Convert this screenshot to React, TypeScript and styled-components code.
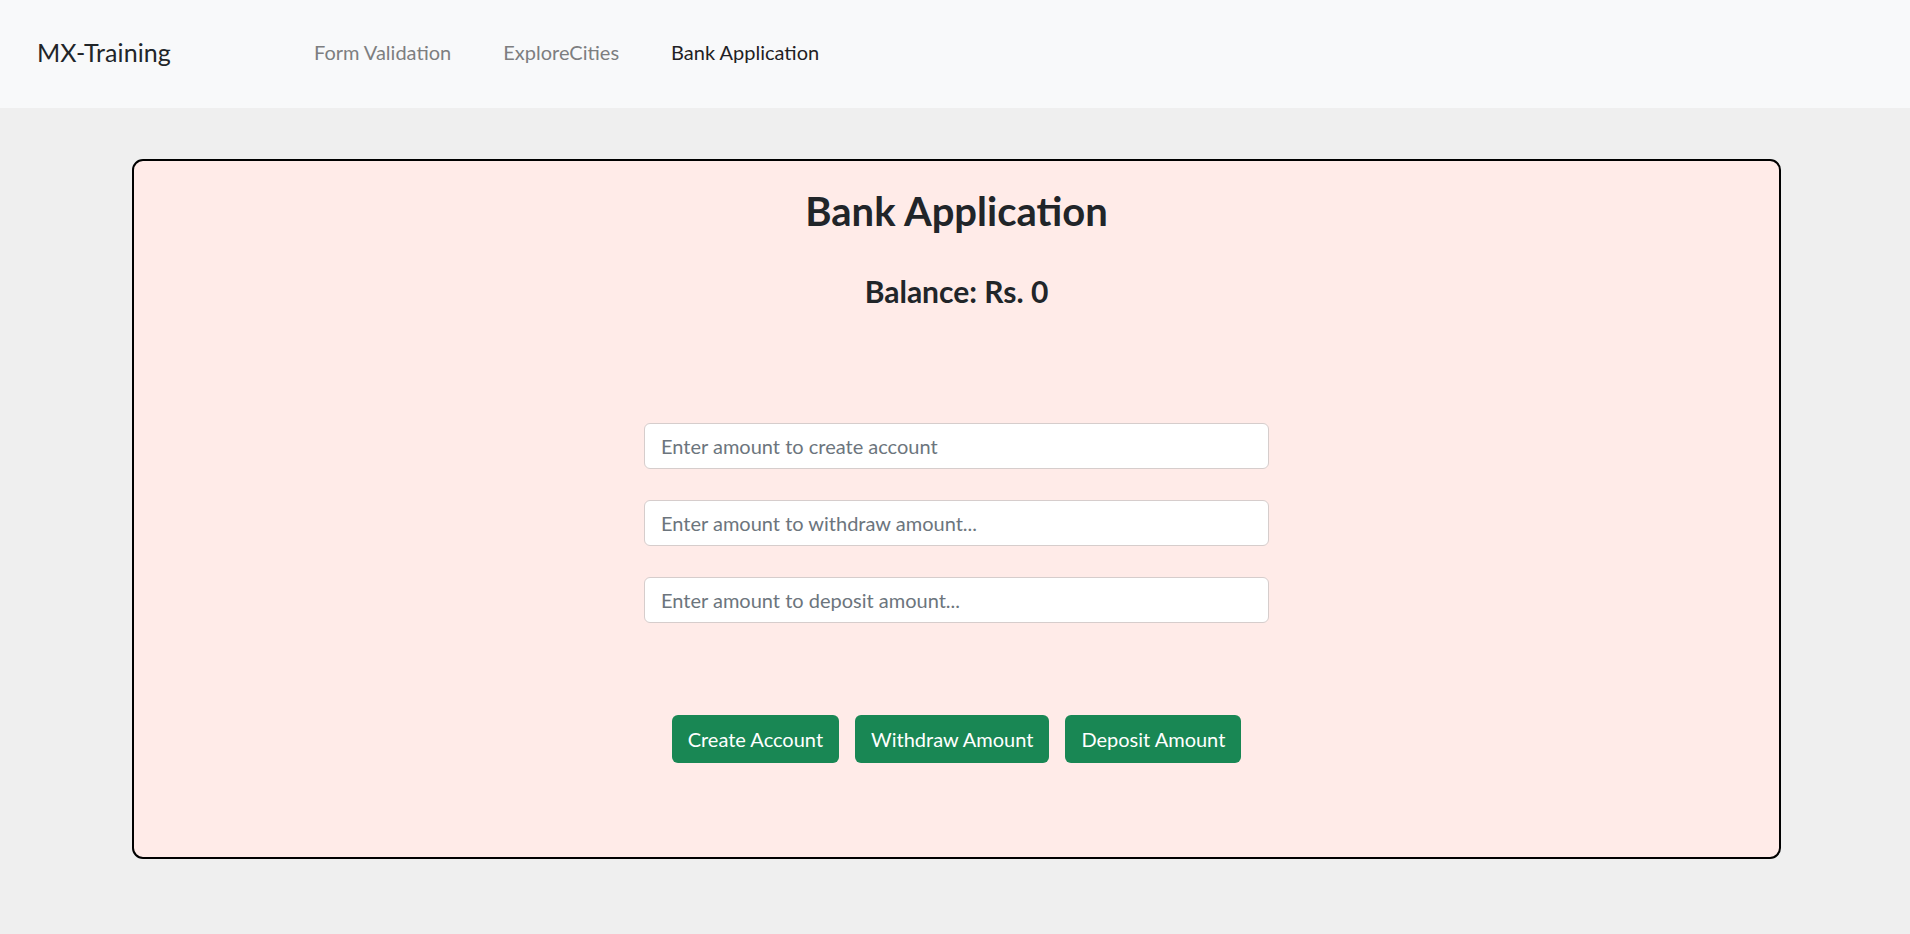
import React from "react";
import styled, { createGlobalStyle } from "styled-components";

const GlobalStyle = createGlobalStyle`
  html, body {
    margin: 0;
    padding: 0;
    background: #efefef;
    font-family: "Lato", "Noto Sans", sans-serif;
    color: #212529;
  }
  * { box-sizing: border-box; }
`;

const Page = styled.div`
  min-height: 934px;
  background: #efefef;
`;

const NavBar = styled.nav`
  height: 108px;
  background: #f8f9fa;
  display: flex;
  align-items: center;
  padding: 0 0 5px 37px;
`;

const Brand = styled.a`
  font-size: 25px;
  color: #212529;
  text-decoration: none;
  margin-right: 143px;
  letter-spacing: 0.1px;
`;

const NavLinks = styled.div`
  display: flex;
  align-items: center;
  gap: 52px;
`;

const NavLink = styled.a<{ $active?: boolean }>`
  font-size: 20px;
  color: ${(p) => (p.$active ? "#1f2124" : "#7d7e80")};
  text-decoration: none;
`;

const Main = styled.main`
  padding: 51px 0 0 132px;
  display: flex;
`;

const Card = styled.section`
  width: 1649px;
  height: 700px;
  background: #ffebe8;
  border: 2px solid #000;
  border-radius: 11px;
  display: flex;
  flex-direction: column;
  align-items: center;
`;

const Title = styled.h2`
  margin: 26px 0 0;
  font-size: 40px;
  font-weight: 700;
  line-height: 48px;
  color: #212529;
`;

const Balance = styled.h4`
  margin: 38px 0 0;
  font-size: 30px;
  font-weight: 700;
  line-height: 36px;
  color: #212529;
`;

const Inputs = styled.div`
  margin-top: 114px;
  display: flex;
  flex-direction: column;
  gap: 31px;
  width: 625px;
`;

const AmountInput = styled.input`
  width: 100%;
  height: 46px;
  padding: 0 16px;
  border: 1px solid #d6cdcc;
  border-radius: 6px;
  background: #fff;
  font-family: "Lato", "Noto Sans", sans-serif;
  font-size: 20px;
  color: #212529;
  outline: none;
  &::placeholder {
    color: #6c757d;
  }
`;

const Actions = styled.div`
  margin-top: 92px;
  display: flex;
  gap: 16px;
`;

const Button = styled.button`
  height: 48px;
  padding: 0 16px;
  border: none;
  border-radius: 6px;
  background: #198754;
  color: #fff;
  font-family: "Lato", "Noto Sans", sans-serif;
  font-size: 20px;
  cursor: pointer;
`;

export default function App() {
  return (
    <Page>
      <GlobalStyle />
      <NavBar>
        <Brand href="#">MX-Training</Brand>
        <NavLinks>
          <NavLink href="#">Form Validation</NavLink>
          <NavLink href="#">ExploreCities</NavLink>
          <NavLink href="#" $active>
            Bank Application
          </NavLink>
        </NavLinks>
      </NavBar>
      <Main>
        <Card>
          <Title>Bank Application</Title>
          <Balance>Balance: Rs. 0</Balance>
          <Inputs>
            <AmountInput type="number" placeholder="Enter amount to create account" />
            <AmountInput type="number" placeholder="Enter amount to withdraw amount..." />
            <AmountInput type="number" placeholder="Enter amount to deposit amount..." />
          </Inputs>
          <Actions>
            <Button>Create Account</Button>
            <Button>Withdraw Amount</Button>
            <Button>Deposit Amount</Button>
          </Actions>
        </Card>
      </Main>
    </Page>
  );
}
